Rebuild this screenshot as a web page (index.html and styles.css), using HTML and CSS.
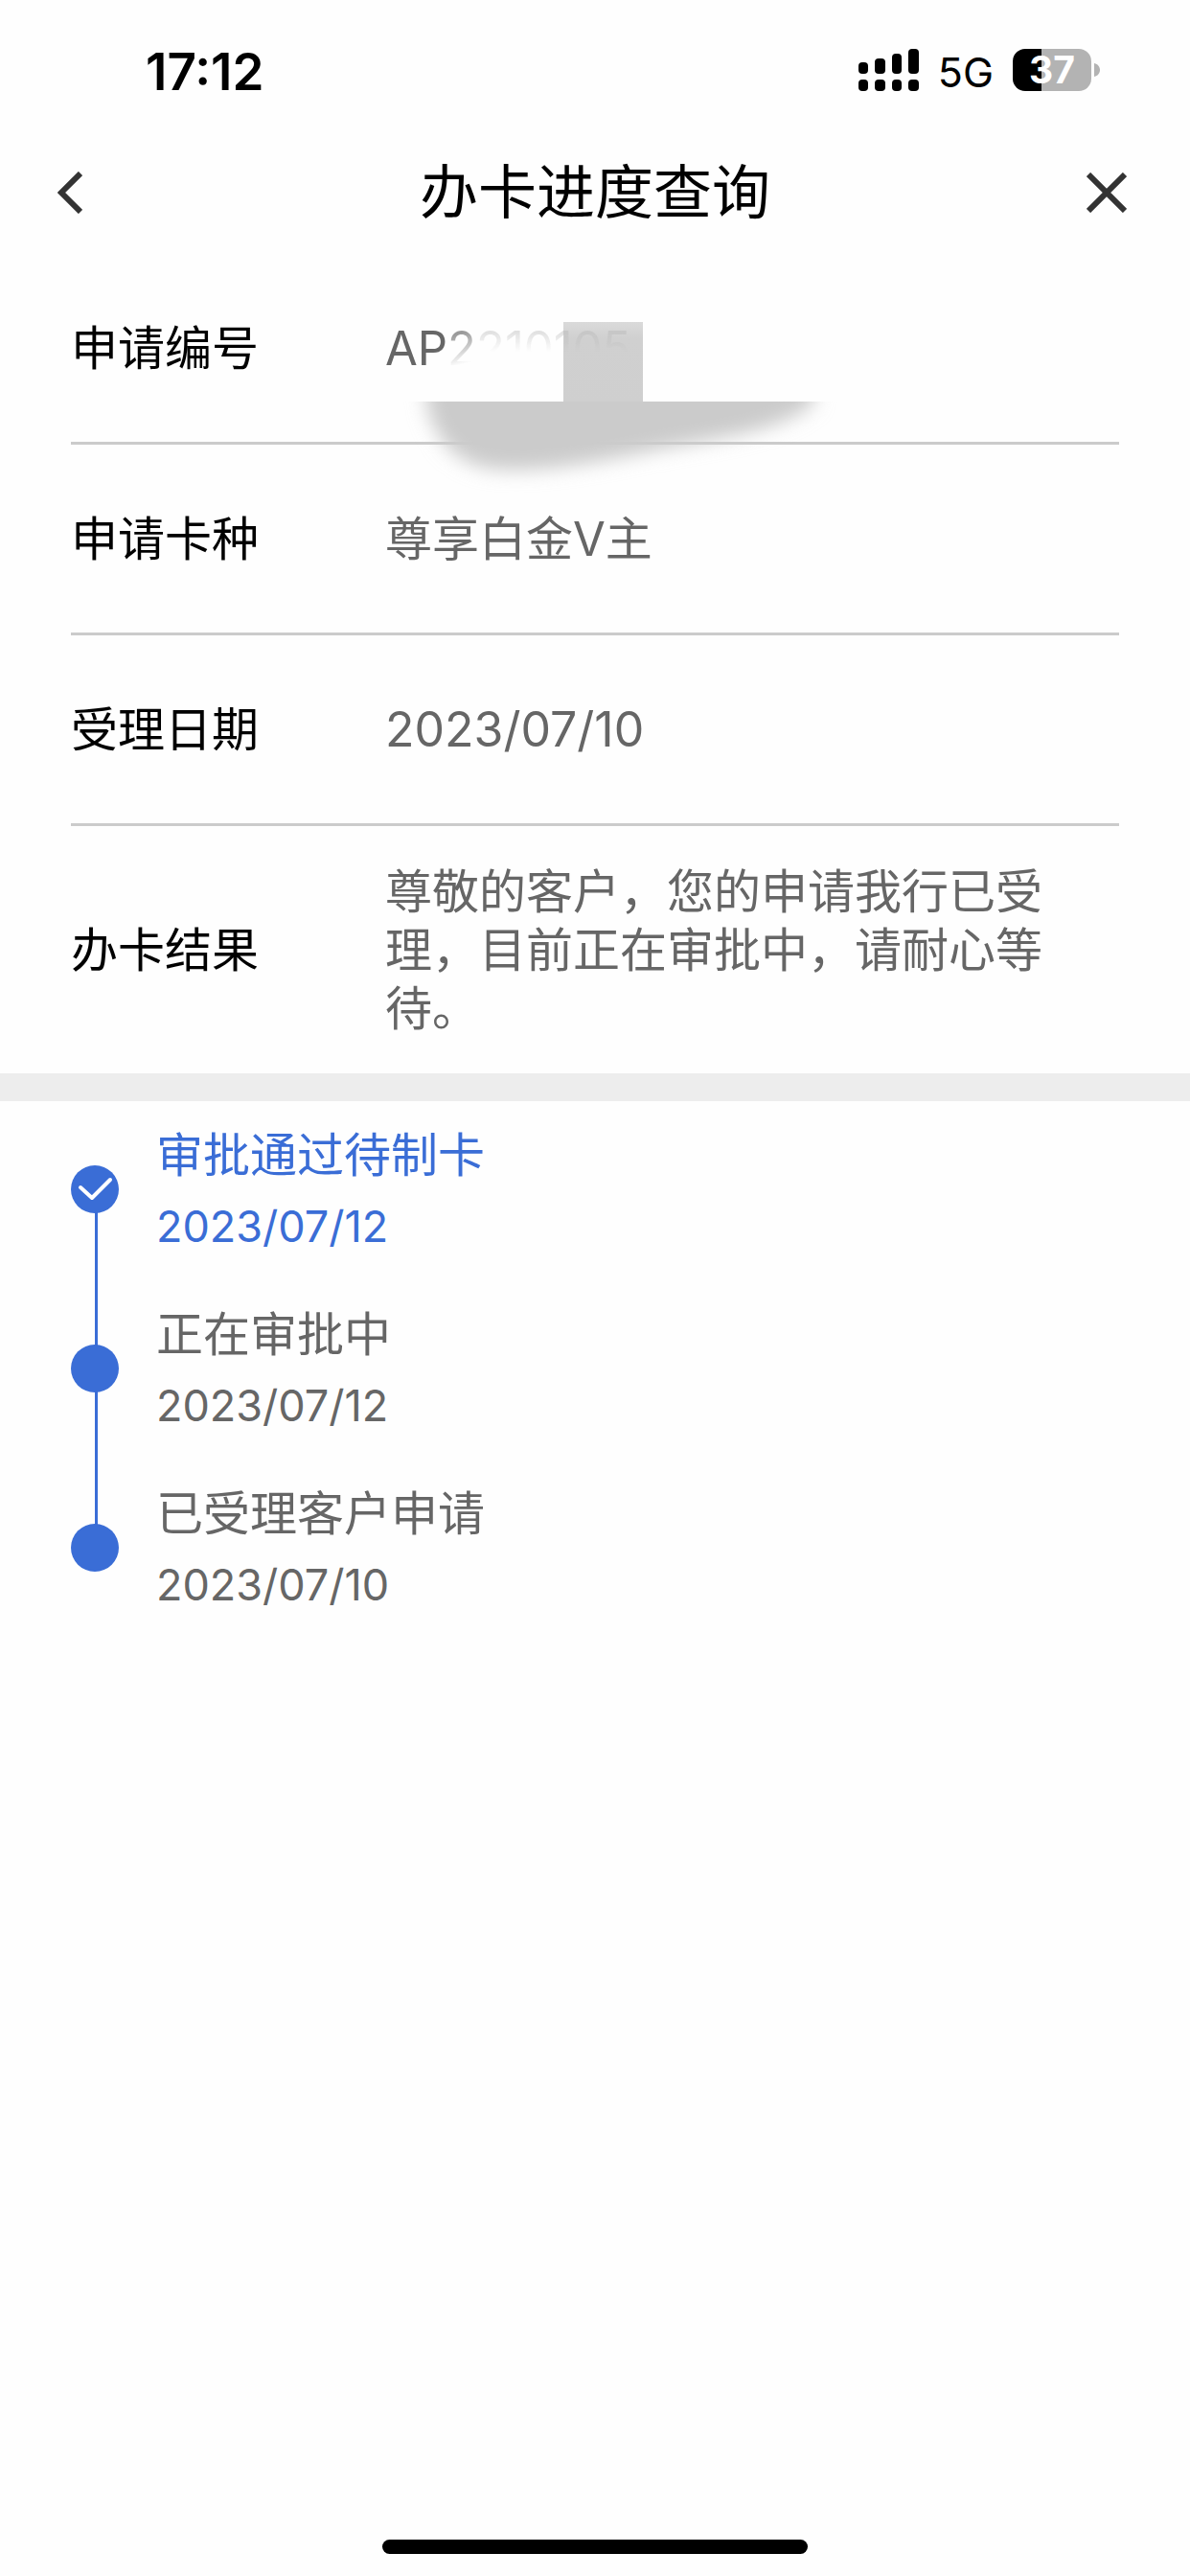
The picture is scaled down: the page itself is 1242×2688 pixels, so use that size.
FILE: index.html
```html
<!DOCTYPE html>
<html lang="zh-CN">
  <head>
    <meta charset="UTF-8" />
    <meta name="viewport" content="width=device-width, initial-scale=1.0" />
    <title>办卡进度查询</title>
    <link rel="stylesheet" href="styles.css">
  </head>
  <body>
    <!-- Status bar -->
    <div class="status-bar">
      <span class="time">17:12</span>
      <div class="status-icons">
        <svg class="signal" viewBox="0 0 63 44" aria-hidden="true">
          <rect x="0" y="14" width="10" height="12" rx="4" />
          <rect x="17" y="10" width="11" height="16" rx="4" />
          <rect x="35" y="5" width="10" height="21" rx="4" />
          <rect x="52" y="0" width="11" height="26" rx="4" />
          <rect x="0" y="32" width="10" height="12" rx="4" />
          <rect x="17" y="32" width="11" height="12" rx="4" />
          <rect x="35" y="32" width="10" height="12" rx="4" />
          <rect x="52" y="32" width="11" height="12" rx="4" />
        </svg>
        <span class="network">5G</span>
        <div class="battery">
          <span class="battery-level">37</span>
          <svg class="battery-tip" viewBox="0 0 6 14" aria-hidden="true">
            <path d="M0 0C4 1 6 4 6 7C6 10 4 13 0 14Z" />
          </svg>
        </div>
      </div>
    </div>

    <!-- Title bar -->
    <header class="navbar">
      <button class="nav-button" aria-label="返回">
        <svg class="back-icon" viewBox="0 0 26 44" aria-hidden="true">
          <path d="M24 2L4 22L24 42" />
        </svg>
      </button>
      <h1>办卡进度查询</h1>
      <button class="nav-button" aria-label="关闭">
        <svg class="close-icon" viewBox="0 0 42 42" aria-hidden="true">
          <path d="M2 2L40 40M40 2L2 40" />
        </svg>
      </button>
    </header>

    <main>
      <dl class="details">
        <div class="detail-row">
          <dt>申请编号</dt>
          <dd class="masked">
            <svg class="smudge" viewBox="0 0 500 180" aria-hidden="true">
              <defs>
                <filter id="soft" x="-20%" y="-20%" width="140%" height="140%">
                  <feGaussianBlur stdDeviation="10" />
                </filter>
                <clipPath id="lower">
                  <rect x="0" y="83" width="500" height="97" />
                </clipPath>
                <linearGradient id="block" x1="0" y1="0" x2="0" y2="1">
                  <stop offset="0" stop-color="#dadada" />
                  <stop offset="0.2" stop-color="#d0d0d0" />
                  <stop offset="1" stop-color="#cfcfcf" />
                </linearGradient>
              </defs>
              <rect x="186" y="0" width="83" height="84" fill="url(#block)" />
              <g clip-path="url(#lower)">
                <path filter="url(#soft)" fill="#cbcbcb" d="M43 40V84C50 122 75 148 110 153C158 159 230 145 290 132C370 118 420 110 448 84V40Z" />
              </g>
            </svg>
            <span class="number">AP<span class="fade">2</span><span class="fade-more">210105</span></span>
          </dd>
        </div>
        <div class="detail-row">
          <dt>申请卡种</dt>
          <dd>尊享白金V主</dd>
        </div>
        <div class="detail-row">
          <dt>受理日期</dt>
          <dd class="date">2023/07/10</dd>
        </div>
        <div class="detail-row">
          <dt>办卡结果</dt>
          <dd>尊敬的客户，您的申请我行已受理，目前正在审批中，请耐心等待。</dd>
        </div>
      </dl>

      <!-- Progress timeline -->
      <ol class="timeline">
        <li class="step current">
          <span class="dot">
            <svg class="check" viewBox="0 0 50 50" aria-hidden="true">
              <path d="M10 23L22 34L41 15" />
            </svg>
          </span>
          <div class="step-text">
            <p class="step-title">审批通过待制卡</p>
            <p class="step-date">2023/07/12</p>
          </div>
        </li>
        <li class="step">
          <span class="dot"></span>
          <div class="step-text">
            <p class="step-title">正在审批中</p>
            <p class="step-date">2023/07/12</p>
          </div>
        </li>
        <li class="step">
          <span class="dot"></span>
          <div class="step-text">
            <p class="step-title">已受理客户申请</p>
            <p class="step-date">2023/07/10</p>
          </div>
        </li>
      </ol>
    </main>

    <div class="home-indicator"></div>
  </body>
</html>
```

FILE: styles.css
```css
* {
  margin: 0;
  padding: 0;
  box-sizing: border-box;
}

body {
  display: flex;
  flex-direction: column;
  min-height: 100vh;
  background-color: #fefefe;
  color: #000;
  font-family: Inter, "Noto Sans CJK SC", sans-serif;
  font-size: 49px;
  line-height: 61px;
}

/* Status bar */
.status-bar {
  display: flex;
  justify-content: space-between;
  align-items: center;
  height: 146px;
  padding: 0 94px 0 152px;
}

.time {
  padding-top: 4px;
  font-size: 53px;
  font-weight: 600;
}

.status-icons {
  display: flex;
  align-items: center;
}

.signal {
  width: 63px;
  height: 44px;
}

.network {
  padding-top: 4px;
  margin: 0 20px;
  font-size: 43px;
}

.battery {
  display: flex;
  align-items: center;
  gap: 3px;
}

.battery-level {
  width: 82px;
  height: 44px;
  border-radius: 13px;
  background: linear-gradient(to right, #000 37%, #b3b3b3 37%);
  color: #fff;
  font-size: 39px;
  font-weight: 700;
  line-height: 44px;
  text-align: center;
}

.battery-tip {
  width: 6px;
  height: 14px;
  fill: #b3b3b3;
}

/* Title bar */
.navbar {
  display: flex;
  justify-content: space-between;
  align-items: center;
  height: 110px;
  padding: 0 48px;
}

.navbar h1 {
  font-size: 61px;
  font-weight: 400;
}

.nav-button {
  display: flex;
  justify-content: center;
  align-items: center;
  width: 78px;
  height: 78px;
  border: none;
  background: none;
  cursor: pointer;
}

.nav-button:first-child {
  justify-content: flex-start;
  padding-left: 12px;
}

.nav-button svg {
  fill: none;
  stroke: #333;
  stroke-width: 6;
}

.back-icon {
  width: 26px;
  height: 44px;
}

.close-icon {
  width: 42px;
  height: 42px;
}

/* Application details */
.details {
  padding: 9px 74px 0;
  border-bottom: 29px solid #ededed;
}

.detail-row {
  display: flex;
  align-items: center;
  min-height: 199px;
  border-bottom: 3px solid #cbcbcb;
}

.detail-row:last-child {
  min-height: 258px;
  border-bottom: none;
}

.detail-row dt {
  flex: 0 0 328px;
}

.detail-row dd {
  flex: 1;
  padding-right: 40px;
  color: #666;
}

.detail-row .date {
  font-size: 50px;
}

/* Smudge that hides the application number */
.masked {
  position: relative;
}

.smudge {
  position: absolute;
  top: 3px;
  left: 0;
  width: 500px;
  height: 180px;
}

.number {
  position: relative;
}

.fade,
.fade-more {
  background-clip: text;
  -webkit-background-clip: text;
  color: transparent;
}

.fade {
  background-image: linear-gradient(165deg, #999 25%, #fefefe 75%);
}

.fade-more {
  background-image: linear-gradient(to bottom, rgba(180, 180, 180, 0.4) 20%, rgba(180, 180, 180, 0) 56%);
}

/* Timeline */
.timeline {
  display: flex;
  flex-direction: column;
  gap: 56px;
  padding: 26px 74px;
  list-style: none;
}

.step {
  position: relative;
  display: flex;
  align-items: center;
  gap: 39px;
  color: #666;
}

.step.current {
  color: #3a6dd6;
}

/* Line from this dot to the next one */
.step:not(:last-child)::before {
  content: "";
  position: absolute;
  top: 50%;
  left: 25px;
  width: 3px;
  height: calc(100% + 56px);
  background-color: #3a6dd6;
}

.dot {
  position: relative;
  width: 50px;
  height: 50px;
  border-radius: 50%;
  background-color: #3a6dd6;
}

.check {
  display: block;
  fill: none;
  stroke: #fff;
  stroke-width: 4;
  stroke-linecap: round;
  stroke-linejoin: round;
}

.step-text {
  display: flex;
  flex-direction: column;
  gap: 18px;
}

.step-date {
  font-size: 45px;
  line-height: 52px;
}

.home-indicator {
  width: 444px;
  height: 15px;
  margin: auto auto 23px;
  border-radius: 8px;
  background-color: #000;
}
```
